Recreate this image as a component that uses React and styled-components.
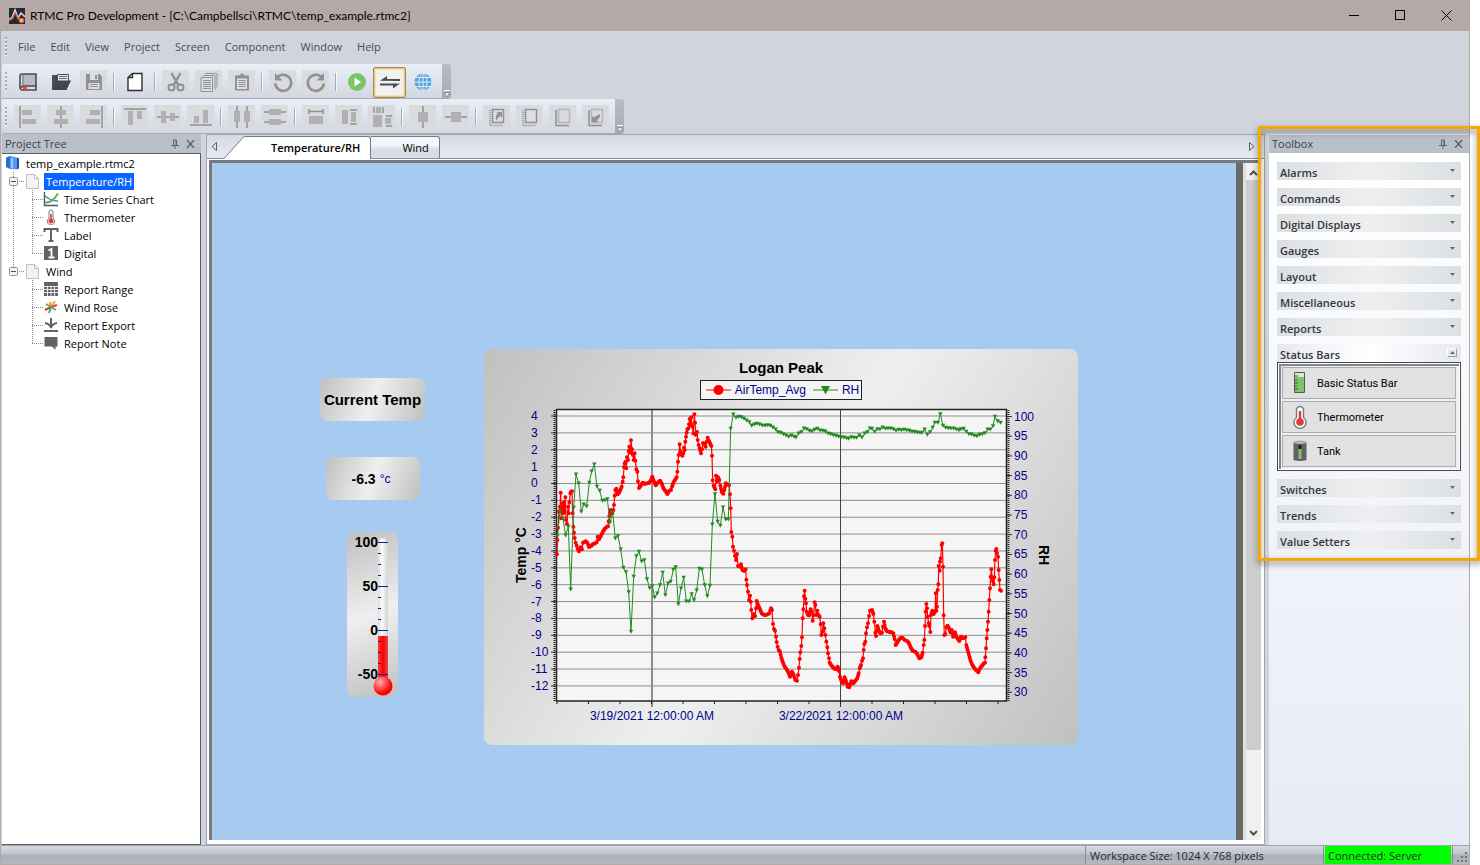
import React from "react";
import styled, { createGlobalStyle, css } from "styled-components";

const GlobalStyle = createGlobalStyle`
  * {
    box-sizing: border-box;
  }

  body {
    margin: 0;
    background: white;
    font-family: "Open Sans", "Segoe UI", sans-serif;
    font-size: 11px;
    color: black;
  }

  button {
    font: inherit;
    color: inherit;
    padding: 0;
    border: none;
    background: none;
  }

  ul {
    margin: 0;
    padding: 0;
    list-style: none;
  }
`;

/* ---------- toolbar icons, all on a 20x20 grid ---------- */

const gray = "#8f9195";
const soft = "#aeb0b4";

const icons = {
  newProject: (
    <>
      <path d="M4 2h14v12H5.500q-2 0-2 2" fill="#b9bbbe" stroke="#4b4c50" strokeWidth="1.600" />
      <path d="M4 2q-2 0-2 2.500V15q0 3 2.500 3H18v-4" fill="none" stroke="#4b4c50" strokeWidth="1.600" />
      <path d="M5 2v12" stroke="#77797d" />
      <path d="M5 16h12" stroke="#d8d9db" strokeWidth="2" />
      <path d="M5 14.500h4V19l-2-1.500L5 19z" fill="#e0454a" />
    </>
  ),
  open: (
    <>
      <path d="M1.500 17V3.500H6l1 2h1" fill="#4b4c50" stroke="#4b4c50" />
      <path d="M6.500 2.500h11v8h-11z" fill="#e6e7ea" stroke="#4b4c50" />
      <path d="M8 4.500h8M8 6.500h8" stroke="#6a6b70" />
      <path d="M5 8.500h15L15.500 18H1z" fill="#45464a" />
    </>
  ),
  save: (
    <>
      <path d="M2 2h13.500L18 4.500V18H2z" fill={gray} />
      <path d="M6 2h8v6H6z" fill="#dcdee2" />
      <path d="M11 3h2v4h-2z" fill={gray} />
      <path d="M4.500 11h11v6h-11z" fill="#dcdee2" />
      <path d="M6 12.500h8M6 14.500h8" stroke={gray} />
    </>
  ),
  page: <path d="M7.500 1.500H17v17H3v-13zM7.500 1.500v4H3" fill="white" stroke="#2e2f32" strokeWidth="1.400" />,
  cut: (
    <g fill="none" stroke={gray} strokeWidth="2">
      <path d="M5.500 1l6.800 12M14.500 1L7.700 13" strokeWidth="2.400" />
      <circle cx="5.500" cy="15.500" r="3" />
      <circle cx="14.500" cy="15.500" r="3" />
    </g>
  ),
  copy: (
    <>
      <path d="M6 1.500h12v14" fill="none" stroke={gray} />
      <path d="M4 3.500h12v14" fill="none" stroke={gray} />
      <path d="M2 5.500h11.500v14H2z" fill="#dcdee2" stroke={gray} />
      <path d="M4 8.500h8M4 10.500h8M4 12.500h8M4 14.500h8M4 16.500h8" stroke={gray} />
    </>
  ),
  paste: (
    <>
      <path d="M3 3.500h14v15H3z" fill={gray} />
      <path d="M5 6.500h10v10.500H5z" fill="#dcdee2" />
      <path d="M6 5.500V3.500h2.500v-2h3v2H14v2z" fill={gray} />
      <path d="M6.500 8.500h7M6.500 10.500h7M6.500 12.500h7M6.500 14.500h7" stroke={gray} />
    </>
  ),
  undo: (
    <>
      <path d="M4.200 5.500A8 8 0 1 1 2.200 11.500" fill="none" stroke={gray} strokeWidth="2.600" />
      <path d="M2 1v7.500h7.500z" fill={gray} />
    </>
  ),
  redo: (
    <>
      <path d="M15.800 5.500A8 8 0 1 0 17.800 11.500" fill="none" stroke={gray} strokeWidth="2.600" />
      <path d="M18 1v7.500h-7.500z" fill={gray} />
    </>
  ),
  play: (
    <>
      <circle cx="10" cy="10" r="9" fill="#7cc466" />
      <path d="M7.500 5.500v9l6.500-4.500z" fill="white" />
    </>
  ),
  swap: <path d="M0 8.700l7-4.700v3h13v2zM20 11.500l-7 5v-3H0v-2z" fill="#4b4c50" />,
  globe: (
    <>
      <circle cx="10" cy="10" r="8.500" fill="#55a5dd" />
      <g fill="none" stroke="#dcebf8">
        <ellipse cx="10" cy="10" rx="4" ry="8.500" />
        <path d="M10 1v18M1 10h18M2.500 5.500h15M2.500 14.500h15" />
      </g>
    </>
  ),
  alignLeft: (
    <>
      <path d="M2 -1v22" stroke={gray} strokeWidth="1.500" />
      <path d="M4 3h10v5H4zM4 12h14v5H4z" fill={soft} />
    </>
  ),
  alignCenter: (
    <>
      <path d="M10 -1v22" stroke={gray} strokeWidth="1.500" />
      <path d="M5 3h10v5H5zM3 12h14v5H3z" fill={soft} />
    </>
  ),
  alignRight: (
    <>
      <path d="M18 -1v22" stroke={gray} strokeWidth="1.500" />
      <path d="M6 3h10v5H6zM2 12h14v5H2z" fill={soft} />
    </>
  ),
  alignTop: (
    <>
      <path d="M-1 2h22" stroke={gray} strokeWidth="1.500" />
      <path d="M3 4h5v14H3zM12 4h5v8h-5z" fill={soft} />
    </>
  ),
  alignMiddle: (
    <>
      <path d="M-1 10h22" stroke={gray} strokeWidth="1.500" />
      <path d="M3 4h5v12H3zM12 6h5v8h-5z" fill={soft} />
    </>
  ),
  alignBottom: (
    <>
      <path d="M-1 18h22" stroke={gray} strokeWidth="1.500" />
      <path d="M3 9h5v7H3zM12 3h5v13h-5z" fill={soft} />
    </>
  ),
  spaceAcross: (
    <>
      <path d="M5 -1v22M15 -1v22" stroke={gray} strokeWidth="1.500" />
      <path d="M2 4h6v11H2zM12 4h6v11h-6z" fill={soft} />
    </>
  ),
  spaceDown: (
    <>
      <path d="M-1 5h22M-1 15h22" stroke={gray} strokeWidth="1.500" />
      <path d="M4 2h12v6H4zM4 12h12v6H4z" fill={soft} />
    </>
  ),
  sameWidth: (
    <>
      <path d="M3 2v5M17 2v5M3 4.500h14" stroke={gray} strokeWidth="1.500" fill="none" />
      <path d="M3 9h14v8H3z" fill={soft} />
    </>
  ),
  sameHeight: (
    <>
      <path d="M11 3h7M11 17h7" stroke={gray} strokeWidth="1.500" fill="none" />
      <path d="M3 3h6v14H3zM12 5h5v10h-5z" fill={soft} />
    </>
  ),
  sameSize: (
    <>
      <path d="M2 0v6M11 0v6M14 9h6M14 19h6" stroke={gray} strokeWidth="1.500" />
      <path d="M1 8h9v12H1zM4 0h5v6H4zM13 11h6v6h-6z" fill={soft} />
    </>
  ),
  centerAcross: (
    <>
      <path d="M10 -1v22" stroke={gray} strokeWidth="1.500" />
      <path d="M5 5h10v10H5z" fill={soft} />
    </>
  ),
  centerDown: (
    <>
      <path d="M-1 10h22" stroke={gray} strokeWidth="1.500" />
      <path d="M5 5h10v10H5z" fill={soft} />
    </>
  ),
  bringFront: (
    <>
      <path d="M3 3v15.500h13" fill="none" stroke={gray} strokeDasharray="1 1" strokeWidth="1.500" />
      <path d="M5.500 2.500h11v13h-11z" fill="#dcdee2" stroke={gray} strokeWidth="1.500" />
      <path d="M9 14q-1-6 2-8l-2-1h6v6l-1.500-2Q11 10 9 14z" fill={gray} />
    </>
  ),
  bringForward: (
    <>
      <path d="M3 3v15.500h13" fill="none" stroke={gray} strokeDasharray="1 1" strokeWidth="1.500" />
      <path d="M5.500 2.500h11v13h-11z" fill="#dcdee2" stroke={gray} strokeWidth="1.500" />
    </>
  ),
  sendBackward: (
    <>
      <path d="M3 3v15.500h13" fill="none" stroke={gray} strokeWidth="1.500" />
      <path d="M5.500 2.500h11v13h-11z" fill="none" stroke={gray} strokeDasharray="1 1" strokeWidth="1.500" />
    </>
  ),
  sendBack: (
    <>
      <path d="M3 3v15.500h13" fill="none" stroke={gray} strokeWidth="1.500" />
      <path d="M5.500 2.500h11v13h-11z" fill="none" stroke={gray} strokeDasharray="1 1" strokeWidth="1.500" />
      <path d="M14 7q0 5-3 6l1 2H6V9l1.500 1.500Q11 8 14 7z" fill={gray} />
    </>
  ),
};

const ToolIcon = ({ name }) => (
  <svg width="20" height="20" viewBox="0 0 20 20" overflow="visible">
    {icons[name]}
  </svg>
);

/* ---------- tree and toolbox icons, 16x16 ---------- */

const smallIcons = {
  project: (
    <>
      <path d="M1 2.500L5 1v13l-4-2z" fill="#2b6fd0" />
      <path d="M5 1l7 1.500v12L5 14z" fill="#4f9bef" />
      <path d="M12 2.500l2 1v10l-2 1z" fill="#1c4fa3" />
      <path d="M6 3l2 .5v10L6 13z" fill="#9cc9fa" />
    </>
  ),
  screen: <path d="M1.500 1.500h8l4 4v10h-12zM9.500 1.500v4h4" fill="#f3f3f3" stroke="#bfbfbf" />,
  chart: (
    <>
      <path d="M1.500 1v13.500H15" fill="none" stroke="#55585d" strokeWidth="1.400" />
      <path d="M2 5q6 5 13 5" fill="none" stroke="#3d86c6" strokeWidth="1.400" />
      <path d="M2 11.500q7 1 13-9" fill="none" stroke="#62b346" strokeWidth="2" />
    </>
  ),
  thermometer: (
    <>
      <path d="M6 3a2 2 0 0 1 4 0v6.200a3.700 3.700 0 1 1-4 0z" fill="white" stroke="#77797d" />
      <path d="M8 5v6" stroke="#e23b35" strokeWidth="1.600" />
      <circle cx="8" cy="12" r="2.500" fill="#e23b35" />
    </>
  ),
  label: <path d="M1.500 5V2h13v3M8 2v12M5.500 14h5" fill="none" stroke="#606266" strokeWidth="2" />,
  digital: (
    <>
      <path d="M1 1h14v14H1z" fill="#606266" />
      <path d="M5.500 5.500L8.500 4v8.500M5.500 12.500h6" fill="none" stroke="white" strokeWidth="1.800" />
    </>
  ),
  range: (
    <>
      <path d="M1 1h14v14H1z" fill="#606266" />
      <path d="M1 5.500h14M1 8.500h14M1 11.500h14M4.500 5v10M8 5v10M11.500 5v10" stroke="#e9eaeb" />
    </>
  ),
  rose: (
    <g strokeWidth="2">
      <path d="M8 8l4-6" stroke="#e8b82d" />
      <path d="M8 8L7 3" stroke="#f0932b" />
      <path d="M8 8l6-2" stroke="#e23b35" />
      <path d="M8 8l5 3" stroke="#62b346" />
      <path d="M8 8l-2 6" stroke="#3fa0b5" />
      <path d="M8 8l-6 3" stroke="#e23b35" />
      <path d="M8 8L3 5" stroke="#62b346" />
    </g>
  ),
  export: (
    <>
      <path d="M8 1v9" stroke="#606266" strokeWidth="2" />
      <path d="M2 6q5 1 6 5 1-4 6-5" fill="none" stroke="#606266" strokeWidth="1.800" />
      <path d="M1 14h14" stroke="#606266" strokeWidth="2" />
    </>
  ),
  note: <path d="M1.500 2h13v9.500h-2V15L9 11.500H1.500z" fill="#606266" />,
};

const SmallIcon = ({ name }) => (
  <svg width="16" height="16" viewBox="0 0 16 16">
    {smallIcons[name]}
  </svg>
);

const partIcons = {
  bar: (
    <>
      <path d="M6.500 1.500h10v20h-10z" fill="#d9eccf" stroke="#55585d" />
      <path d="M7 6h9v15H7z" fill="#7cc466" />
      <path d="M6 5h4M6 9h3M6 12h4M6 15h3M6 18h4" stroke="#3c5a33" />
    </>
  ),
  thermometer: (
    <>
      <path d="M8.500 5a3.500 3.500 0 0 1 7 0v7.500a6 6 0 1 1-7 0z" fill="white" stroke="#77797d" strokeWidth="1.400" />
      <path d="M12 6v10" stroke="#e23b35" strokeWidth="2.500" />
      <circle cx="12" cy="17" r="3.800" fill="#e23b35" />
    </>
  ),
  tank: (
    <>
      <path d="M5.500 3q6.500-2.500 13 0v18q-6.500 2-13 0z" fill="#606266" />
      <ellipse cx="12" cy="3.500" rx="6.500" ry="1.500" fill="#b5b7ba" />
      <path d="M10.500 6h3v14h-3z" fill="#7cc466" />
      <path d="M10.500 6h3v4h-3z" fill="#17181a" />
    </>
  ),
};

const PinIcon = () => (
  <svg width="8" height="10" viewBox="0 0 8 10">
    <path d="M2.500 6V1h3v5M5 1v5M0 6.500h8M4 7v3" fill="none" stroke="#5c6068" />
  </svg>
);

const CloseIcon = () => (
  <svg width="9" height="8" viewBox="0 0 9 8">
    <path d="M1 0l7 8M8 0L1 8" stroke="#5c6068" strokeWidth="1.400" />
  </svg>
);

/* ---------- content ---------- */

const menus = ["File", "Edit", "View", "Project", "Screen", "Component", "Window", "Help"];

const mainTools = [
  ["newProject", "New project", true],
  ["open", "Open project", true],
  ["save", "Save"],
  null,
  ["page", "New screen", true],
  null,
  ["cut", "Cut"],
  ["copy", "Copy"],
  ["paste", "Paste"],
  null,
  ["undo", "Undo"],
  ["redo", "Redo"],
  null,
  ["play", "Run", true],
  ["swap", "Connect", true, true],
  ["globe", "Web", true],
];

const layoutTools = [
  ["alignLeft", "Align left"],
  ["alignCenter", "Align center"],
  ["alignRight", "Align right"],
  null,
  ["alignTop", "Align top"],
  ["alignMiddle", "Align middle"],
  ["alignBottom", "Align bottom"],
  null,
  ["spaceAcross", "Space across"],
  ["spaceDown", "Space down"],
  null,
  ["sameWidth", "Same width"],
  ["sameHeight", "Same height"],
  ["sameSize", "Same size"],
  null,
  ["centerAcross", "Center horizontally"],
  ["centerDown", "Center vertically"],
  null,
  ["bringFront", "Bring to front"],
  ["bringForward", "Bring forward"],
  ["sendBackward", "Send backward"],
  ["sendBack", "Send to back"],
];

const screens = [
  {
    name: "Temperature/RH",
    selected: true,
    parts: [
      ["chart", "Time Series Chart"],
      ["thermometer", "Thermometer"],
      ["label", "Label"],
      ["digital", "Digital"],
    ],
  },
  {
    name: "Wind",
    parts: [
      ["range", "Report Range"],
      ["rose", "Wind Rose"],
      ["export", "Report Export"],
      ["note", "Report Note"],
    ],
  },
];

const groups = [
  "Alarms",
  "Commands",
  "Digital Displays",
  "Gauges",
  "Layout",
  "Miscellaneous",
  "Reports",
  "Status Bars",
  "Switches",
  "Trends",
  "Value Setters",
];

const statusBarParts = [
  ["bar", "Basic Status Bar"],
  ["thermometer", "Thermometer"],
  ["tank", "Tank"],
];

/* ---------- chart data, three units to a pixel ---------- */

const tempFirst =
  "231,643 232,600 234,563 237,515 240,500 242,458 244,535 246,510 248,490 250,520 252,487 254,515 256,472 258,540 261,552 264,500 266,520 268,487 271,460 273,455 276,454 278,520 280,560 282,578 284,594 287,608 290,617 293,627 297,634 302,622 306,628 309,608 317,604 322,608 327,621 333,618 338,613 345,610 350,607 353,590 357,598 362,589 368,577 374,566 379,562 384,559 388,528 392,510 397,520 400,510 402,495 404,467 406,450 409,446 413,463 416,460 420,452 425,440 428,425 430,412 432,381 434,370 437,365 439,385 441,352 444,360 446,333 448,320 451,338 453,301 456,328 459,345 461,360 464,340 466,362 469,388 472,395 474,424 477,444 482,437 488,428 495,432 502,430 508,428 513,420 517,410 521,422 527,436 533,428 540,422 546,432 550,445 556,452 562,462 568,452 573,450 576,440 580,428 585,420 590,412 592,395 594,365 596,345 599,313 602,335 607,347 610,340 612,323 614,330 616,305 618,290 620,278 622,268 625,265 627,253 629,237 632,255 634,232 637,260 640,280 643,223 645,248 647,284 651,276 653,300 656,315 659,325 663,340 666,328 669,309 673,312 677,320 680,305 683,293 686,302 690,310 694,318 696,347 698,421 701,437 706,448 708,407 711,425 714,412 718,420 721,437 725,455 730,461 733,450 737,430 742,433 747,436 750,463 752,505 754,576 757,590 759,620 762,632 765,648 768,660 771,642 774,678 780,680 783,673 787,690 792,693 797,688 799,719 801,735 804,755 807,780 810,767 812,785 814,810 817,835 821,822 825,828 828,805 830,783 834,795 840,808 845,820 853,825 860,824 868,820 873,805 876,810 879,852 882,867 885,872 888,890 890,906 893,920 896,930";

const tempSecond =
  "0,935 4,953 8,965 13,978 18,985 24,995 30,1010 36,995 41,1005 46,1020 51,1022 54,1005 57,983 59,957 61,937 64,918 66,892 68,835 70,808 72,769 74,752 76,776 78,790 80,815 84,825 88,826 92,808 95,815 98,842 101,825 104,787 106,795 109,825 112,812 115,825 119,830 122,853 124,885 127,875 130,850 133,865 136,885 139,905 142,922 144,940 147,955 149,968 155,977 162,985 168,988 173,980 177,993 180,1010 184,1022 189,1030 194,1012 199,1025 203,1040 208,1042 214,1024 220,1030 226,1022 232,1015 236,1000 239,985 243,975 246,962 249,955 251,930 253,912 256,905 258,880 261,862 264,850 267,828 270,812 276,810 280,822 283,845 286,878 288,888 292,858 296,870 301,880 306,878 309,860 312,845 316,865 320,873 328,876 335,877 340,880 344,897 347,915 353,905 360,895 367,893 374,900 380,902 386,908 392,922 398,932 406,935 412,943 418,955 424,952 428,938 431,915 433,900 435,858 437,815 439,792 441,805 443,830 446,850 448,858 451,876 453,825 457,812 461,822 465,815 467,760 469,812 471,800 473,750 475,733 476,678 479,692 480,665 482,655 485,615 487,610 489,680 491,826 493,885 496,882 499,862 503,857 507,865 511,877 515,870 519,890 525,877 530,892 538,903 543,890 549,895 556,892 559,915 563,930 567,945 571,960 576,973 582,983 588,990 595,997 600,985 606,977 612,970 615,968 616,952 618,925 620,895 622,870 624,845 626,815 628,780 630,745 632,710 634,688 637,715 641,733 643,712 645,660 647,632 649,627 651,640 654,650 656,690 658,720 660,750 663,752";

const rhFirst =
  "232,588 240,513 249,535 257,586 265,560 272,748 281,503 288,403 296,430 304,515 311,493 320,499 328,428 335,394 343,373 351,440 359,452 367,482 375,481 382,477 390,548 398,518 406,595 414,588 422,628 430,683 438,696 446,756 453,875 461,710 469,648 477,635 485,664 493,660 501,717 509,744 517,738 524,772 532,760 540,735 548,698 556,765 564,730 572,725 580,689 587,681 595,792 603,745 611,713 619,784 627,784 635,762 642,780 650,751 658,686 666,688 674,735 682,768 690,737 697,553 705,462 713,545 721,557 729,502 737,538 745,538 752,266 760,223 768,233 776,230 784,231 792,236 800,241 808,246 815,257 823,253 831,251 839,253 847,256 855,257 863,255 871,257 879,262 887,268 894,276";

const rhSecond =
  "2,278 10,282 18,286 26,290 34,286 42,290 48,292 56,280 64,276 72,265 80,267 88,272 96,274 104,269 112,266 120,271 128,272 136,274 144,280 152,282 160,285 168,287 176,290 184,291 192,292 200,294 206,296 214,291 222,293 230,293 238,286 246,292 254,280 262,276 270,265 276,266 284,275 292,267 300,268 308,262 316,266 324,265 332,265 340,267 348,272 356,269 364,270 372,269 380,270 388,272 396,275 404,275 412,277 420,278 426,278 434,268 442,284 450,276 458,263 464,248 474,248 481,222 489,257 497,263 505,264 513,265 521,265 529,268 537,270 543,267 551,266 559,275 567,282 575,283 583,287 591,288 599,284 607,282 615,279 623,268 631,268 639,258 645,230 653,243 662,248";

const readPoints = (text, shift) =>
  text.split(" ").map((pair) => {
    const [x, y] = pair.split(",").map(Number);
    return [(x + shift) / 3 - 4, y / 3 - 60];
  });

const temp = [...readPoints(tempFirst, 0), ...readPoints(tempSecond, 900)];
const rh = [...readPoints(rhFirst, 0), ...readPoints(rhSecond, 900)];

const toLine = (points) => points.map((p) => p.join(",")).join(" ");

// the logger stores a temperature every quarter of an hour, so fill in between the turns
const tempDots = temp
  .flatMap(([x, y], i) => {
    const next = temp[i + 1];
    if (!next) return [[x, y]];
    const steps = Math.max(1, Math.round((next[0] - x) / 0.67));
    return Array.from({ length: steps }, (_, k) => [
      x + ((next[0] - x) * k) / steps,
      y + ((next[1] - y) * k) / steps,
    ]);
  })
  .map(([x, y]) => `M${x} ${y}h.01`)
  .join("");

const rhMarks = rh.map(([x, y]) => `M${x - 2.2} ${y - 1.8}h4.400l-2.200 4z`).join("");

const range = (from, to, step) =>
  Array.from({ length: Math.floor((to - from) / step) + 1 }, (_, i) => from + i * step);

const tempY = (v) => 16 + (4 - v) * 16.87;
const rhY = (v) => 16.5 + (100 - v) * 3.94;

function TimeSeries() {
  return (
    <PlotSvg viewBox="0 0 594 345" role="img" aria-label="Temperature and humidity over time">
      <rect x="73" y="10" width="449" height="291" fill="#f5f5f5" />
      {range(-12, 4, 1).map((v) => (
        <g key={v}>
          <path d={`M73 ${tempY(v)}H522`} stroke="#8d8d8d" />
          <path d={`M67 ${tempY(v)}h5`} stroke="#333" />
          <text x="47" y={tempY(v) + 4}>
            {v}
          </text>
        </g>
      ))}
      {range(30, 100, 5).map((v) => (
        <g key={v}>
          <path d={`M523 ${rhY(v)}h5`} stroke="#333" />
          <text x="530" y={rhY(v) + 4}>
            {v}
          </text>
        </g>
      ))}
      <path d="M168 10v297" stroke="#8d8d8d" strokeWidth="2" />
      <path d="M356.500 10v297" stroke="#444" />
      {range(73, 522, 31.5).map((x) => (
        <path key={x} d={`M${x} 301v3`} stroke="#222" />
      ))}
      <path d="M70.500 10v291M524.500 10v291" stroke="#222" strokeWidth="2" strokeDasharray="1 1" />
      <path d="M72.500 9.500h450v291.500h-450z" fill="none" stroke="#222" strokeWidth="1.500" />
      <polyline points={toLine(temp)} fill="none" stroke="#ff0000" strokeWidth="1.200" />
      <path d={tempDots} stroke="#ff0000" strokeWidth="4" strokeLinecap="round" />
      <polyline points={toLine(rh)} fill="none" stroke="#228b22" />
      <path d={rhMarks} fill="#228b22" />
      <text x="168" y="320" textAnchor="middle">
        3/19/2021 12:00:00 AM
      </text>
      <text x="357" y="320" textAnchor="middle">
        3/22/2021 12:00:00 AM
      </text>
      <AxisTitle transform="translate(42 155) rotate(-90)">Temp °C</AxisTitle>
      <AxisTitle transform="translate(555 155) rotate(90)">RH</AxisTitle>
    </PlotSvg>
  );
}

function ThermometerDrawing() {
  return (
    <svg width="51" height="165" viewBox="0 0 51 165">
      <defs>
        <linearGradient id="tube">
          <stop offset="0" stopColor="#dcdcdc" />
          <stop offset="0.4" stopColor="#fafafa" />
          <stop offset="1" stopColor="#d2d2d2" />
        </linearGradient>
        <linearGradient id="mercury">
          <stop offset="0" stopColor="#f53c3c" />
          <stop offset="0.5" stopColor="#ff0000" />
          <stop offset="1" stopColor="#e64646" />
        </linearGradient>
        <radialGradient id="bulb" cx="0.35" cy="0.3" r="0.6">
          <stop offset="0" stopColor="#ffb0b0" />
          <stop offset="1" stopColor="#ff0000" />
        </radialGradient>
      </defs>
      <rect x="31" y="6" width="10" height="145" rx="5" fill="url(#tube)" />
      <rect x="31" y="104" width="10" height="44" fill="url(#mercury)" />
      <circle cx="36" cy="154" r="9.500" fill="url(#bulb)" />
      {range(0, 12, 1).map((i) => (
        <path key={i} d={`M31 ${10.5 + i * 11}h${i % 4 ? 3 : 10}`} stroke="#1a1a9c" />
      ))}
      {[100, 50, 0, -50].map((v, i) => (
        <ScaleText key={v} x="31" y={15 + i * 44} textAnchor="end">
          {v}
        </ScaleText>
      ))}
    </svg>
  );
}

function Tools({ tools, label }) {
  return (
    <ToolbarRow aria-label={label}>
      <ToolbarBody>
        <Grip />
        {tools.map((tool, i) =>
          tool ? (
            <ToolButton key={i} title={tool[1]} $enabled={tool[2]} $active={tool[3]}>
              <ToolIcon name={tool[0]} />
            </ToolButton>
          ) : (
            <Divider key={i} />
          )
        )}
      </ToolbarBody>
      <ToolbarEnd title="Toolbar options">
        <svg width="6" height="7" viewBox="0 0 6 7">
          <path d="M0 .5h6" stroke="white" />
          <path d="M0 3h6L3 6.500z" fill="white" stroke="#666a73" strokeWidth=".6" />
        </svg>
      </ToolbarEnd>
    </ToolbarRow>
  );
}

function PanelHeader({ title }) {
  return (
    <PanelBar>
      <PanelTitle>{title}</PanelTitle>
      <PanelButton title="Auto hide">
        <PinIcon />
      </PanelButton>
      <PanelButton title="Close">
        <CloseIcon />
      </PanelButton>
    </PanelBar>
  );
}

function ProjectTree() {
  return (
    <TreePanel>
      <PanelHeader title="Project Tree" />
      <Tree>
        <TreeRow>
          <RootIcon>
            <SmallIcon name="project" />
          </RootIcon>
          <TreeText>temp_example.rtmc2</TreeText>
        </TreeRow>
        {screens.map((screen, s) => (
          <li key={screen.name}>
            <TreeRow as="div">
              <Guide $width={12} $half={s === screens.length - 1} $line>
                <Expander title="Collapse">
                  <svg width="9" height="9" viewBox="0 0 9 9">
                    <rect x=".5" y=".5" width="8" height="8" rx="1" fill="#f4f4f4" stroke="#919191" />
                    <path d="M2 4.500h5" stroke="#3c4fa0" />
                  </svg>
                </Expander>
              </Guide>
              <SmallIcon name="screen" />
              <TreeText $selected={screen.selected}>{screen.name}</TreeText>
            </TreeRow>
            <ul>
              {screen.parts.map(([icon, name], i) => (
                <TreeRow key={name}>
                  <Guide $width={19} $none={s === screens.length - 1} />
                  <Guide $width={11} $half={i === screen.parts.length - 1} $line />
                  <SmallIcon name={icon} />
                  <TreeText>{name}</TreeText>
                </TreeRow>
              ))}
            </ul>
          </li>
        ))}
      </Tree>
    </TreePanel>
  );
}

function Toolbox() {
  return (
    <ToolboxPanel>
      <PanelHeader title="Toolbox" />
      <Groups>
        {groups.map((name) => {
          const open = name === "Status Bars";
          return (
            <section key={name}>
              <GroupHeader $open={open} aria-expanded={open}>
                {name}
                <GroupArrow $open={open}>
                  <svg width="5" height="3" viewBox="0 0 5 3">
                    <path d={open ? "M0 3h5L2.500 0z" : "M0 0h5L2.500 3z"} fill="#666a70" />
                  </svg>
                </GroupArrow>
              </GroupHeader>
              {open && (
                <PartList>
                  {statusBarParts.map(([icon, label]) => (
                    <PartButton key={label}>
                      <svg width="24" height="24" viewBox="0 0 24 24">
                        {partIcons[icon]}
                      </svg>
                      {label}
                    </PartButton>
                  ))}
                </PartList>
              )}
            </section>
          );
        })}
      </Groups>
      <Callout />
    </ToolboxPanel>
  );
}

function App() {
  return (
    <>
      <GlobalStyle />
      <Window>
        <TitleBar>
          <svg width="16" height="16" viewBox="0 0 16 16">
            <path d="M0 0h16v16H0z" fill="#24283a" />
            <path d="M0 11l3-1 3-8 3 8 3-5 4 4" fill="none" stroke="#d8d3d2" strokeWidth="1.600" />
            <path d="M0 13l4-3 2-5 3 5 3 2" fill="none" stroke="#d8552c" strokeWidth="1.200" />
            <circle cx="12.500" cy="12.500" r="2.800" fill="#f0642a" />
            <circle cx="12.500" cy="12.500" r="1.200" fill="#ffd9a0" />
          </svg>
          <WindowTitle>RTMC Pro Development - [C:\Campbellsci\RTMC\temp_example.rtmc2]</WindowTitle>
          <WindowButton title="Minimize">
            <svg width="11" height="11" viewBox="0 0 11 11">
              <path d="M0 5.500h10" stroke="black" />
            </svg>
          </WindowButton>
          <WindowButton title="Maximize">
            <svg width="11" height="11" viewBox="0 0 11 11">
              <path d="M.5 .5h9v9h-9z" fill="none" stroke="black" />
            </svg>
          </WindowButton>
          <WindowButton title="Close">
            <svg width="11" height="11" viewBox="0 0 11 11">
              <path d="M.5 .5l10 10M10.500 .5l-10 10" stroke="black" />
            </svg>
          </WindowButton>
        </TitleBar>
        <MenuBar>
          <Grip />
          {menus.map((name) => (
            <MenuButton key={name}>{name}</MenuButton>
          ))}
        </MenuBar>
        <Tools tools={mainTools} label="Standard" />
        <Tools tools={layoutTools} label="Layout" />
        <Body>
          <ProjectTree />
          <Workspace>
            <TabStrip>
              <TabScroll title="Scroll left">
                <svg width="6" height="9" viewBox="0 0 6 9">
                  <path d="M5.500 .5v8L1 4.500z" fill="none" stroke="#5c6068" />
                </svg>
              </TabScroll>
              <TabSlant width="21" height="23" viewBox="0 0 21 23">
                <path d="M0 23L19 1.500 21 .5V23z" fill="white" />
                <path d="M0 22.500L19 1.500 21 .5" fill="none" stroke="#777b85" />
              </TabSlant>
              <Tab $active>Temperature/RH</Tab>
              <Tab>Wind</Tab>
              <TabSpace />
              <TabScroll title="Scroll right">
                <svg width="6" height="9" viewBox="0 0 6 9">
                  <path d="M.5 .5v8L5 4.500z" fill="none" stroke="#5c6068" />
                </svg>
              </TabScroll>
            </TabStrip>
            <ScreenFrame>
              <ScreenCanvas>
                <LabelWidget>Current Temp</LabelWidget>
                <DigitalWidget>
                  -6.3 <Unit>°c</Unit>
                </DigitalWidget>
                <ThermometerWidget>
                  <ThermometerDrawing />
                </ThermometerWidget>
                <ChartWidget>
                  <ChartTitle>Logan Peak</ChartTitle>
                  <Legend>
                    <svg width="25" height="12" viewBox="0 0 25 12">
                      <path d="M0 6h25" stroke="#ff0000" />
                      <circle cx="12.500" cy="6" r="5" fill="#ff0000" />
                    </svg>
                    AirTemp_Avg
                    <svg width="25" height="12" viewBox="0 0 25 12">
                      <path d="M0 6h25" stroke="#228b22" />
                      <path d="M8 2h9l-4.500 8.500z" fill="#228b22" />
                    </svg>
                    RH
                  </Legend>
                  <TimeSeries />
                </ChartWidget>
              </ScreenCanvas>
              <ScrollTrack>
                <ScrollButton title="Scroll up">
                  <svg width="9" height="6" viewBox="0 0 9 6">
                    <path d="M1 5l3.500-3.500L8 5" fill="none" stroke="#505050" strokeWidth="2" />
                  </svg>
                </ScrollButton>
                <ScrollThumb />
                <ScrollSpace />
                <ScrollButton title="Scroll down">
                  <svg width="9" height="6" viewBox="0 0 9 6">
                    <path d="M1 1l3.500 3.500L8 1" fill="none" stroke="#505050" strokeWidth="2" />
                  </svg>
                </ScrollButton>
              </ScrollTrack>
            </ScreenFrame>
          </Workspace>
          <Toolbox />
        </Body>
        <StatusBar>
          <StatusCell $width={238}>Workspace Size: 1024 X 768 pixels</StatusCell>
          <StatusCell $width={130} $connected>
            <span>Connected: Server</span>
          </StatusCell>
          <svg width="16" height="18" viewBox="0 0 16 18">
            <path
              d="M12 6h2v2h-2zM12 10h2v2h-2zM8 10h2v2H8zM12 14h2v2h-2zM8 14h2v2H8zM4 14h2v2H4z"
              fill="#6d717b"
            />
          </svg>
        </StatusBar>
      </Window>
    </>
  );
}

export default App;

const Window = styled.div`
  display: flex;
  flex-direction: column;
  height: 100vh;
  min-height: 600px;
  margin-right: 10px;
  border: 1px solid #b5a9a7;
  border-top: none;
  background: #d0d4dd;
`;

const TitleBar = styled.header`
  display: flex;
  align-items: center;
  height: 31px;
  padding-left: 8px;
  background: #b5a9a7;
`;

const WindowTitle = styled.h1`
  flex: 1;
  margin: 0 0 0 5px;
  font-family: Lato, "Segoe UI", sans-serif;
  font-size: 12px;
  font-weight: 400;
  line-height: 16px;
`;

const WindowButton = styled.button`
  display: flex;
  align-items: center;
  justify-content: center;
  width: 46px;
  height: 30px;
`;

const Grip = styled.span`
  width: 2px;
  height: 20px;
  background: repeating-linear-gradient(#a4a9b5 0 2px, #f4f6fa 2px 3px, transparent 3px 4px);
`;

const MenuBar = styled.nav`
  display: flex;
  align-items: center;
  height: 33px;
  padding: 0 0 2px 4px;

  ${Grip} {
    margin-right: 2px;
  }
`;

const MenuButton = styled.button`
  margin-left: 3px;
  padding: 0 6px;
  line-height: 20px;
  color: #4a4d55;
`;

const ToolbarRow = styled.div`
  display: flex;
  height: 35px;
  padding-left: 1px;
`;

const ToolbarBody = styled.div`
  display: flex;
  align-items: center;
  gap: 6px;
  padding: 2px 6px 0 3px;
  border-bottom: 1px solid #a7abb6;
  border-radius: 3px 0 0 3px;
  background: linear-gradient(#eaeef7, #d3d7e1);

  ${Grip} {
    margin-right: 1px;
  }
`;

const ToolbarEnd = styled.button`
  display: flex;
  align-items: flex-end;
  justify-content: center;
  width: 9px;
  padding-bottom: 2px;
  border-radius: 0 3px 3px 0;
  background: linear-gradient(#b9bdc7, #a5a9b4);
`;

const ToolButton = styled.button`
  display: flex;
  align-items: center;
  justify-content: center;
  width: 27px;
  height: 25px;
  background: ${(props) => (props.$enabled ? "transparent" : "#d9dbdf")};

  ${(props) =>
    props.$active &&
    css`
      width: 33px;
      height: 31px;
      margin: 0 -3px;
      border: 1px solid #9a8a70;
      border-radius: 2px;
      background: #f0f1f3;
      box-shadow: inset 0 0 0 1px #f5c07a, inset 0 0 0 2px #fbe3a8;
    `}
`;

const Divider = styled.span`
  width: 2px;
  height: 18px;
  border-left: 1px solid #a7abb6;
  border-right: 1px solid #f8f9fc;
`;

const Body = styled.main`
  display: flex;
  flex: 1;
  min-height: 0;
`;

const PanelBar = styled.div`
  display: flex;
  align-items: center;
  height: 18px;
  padding: 0 5px 0 3px;
  background: #bac0ca;
`;

const PanelTitle = styled.h2`
  flex: 1;
  margin: 0;
  font-size: 11px;
  font-weight: 400;
  line-height: 18px;
  color: #3d4048;
`;

const PanelButton = styled.button`
  display: flex;
  align-items: center;
  justify-content: center;
  width: 17px;
  height: 16px;

  & + & {
    width: 11px;
    margin-left: 2px;
  }
`;

const TreePanel = styled.aside`
  display: flex;
  flex-direction: column;
  width: 200px;
  padding-left: 1px;
  border-top: 1px solid #bac0ca;
`;

const Tree = styled.ul`
  flex: 1;
  border: 1px solid #5b5e66;
  border-left: none;
  background: white;
`;

const TreeRow = styled.li`
  display: flex;
  align-items: center;
  height: 18px;
  padding-left: 11px;
`;

const RootIcon = styled.span`
  display: flex;
  margin-left: -8px;
`;

const TreeText = styled.span`
  margin-left: 3px;
  padding: 0 2px;
  line-height: 17px;
  color: ${(props) => (props.$selected ? "white" : "black")};
  background: ${(props) => (props.$selected ? "#0a64ff" : "none")};
`;

const dots = "#8b8b8b 0 1px, transparent 1px 2px";

const Guide = styled.span`
  display: flex;
  align-items: center;
  align-self: stretch;
  width: ${(props) => props.$width}px;
  background-repeat: no-repeat;
  background-position: 0 0, 0 50%;
  background-image: repeating-linear-gradient(${dots}), repeating-linear-gradient(90deg, ${dots});
  background-size: ${(props) => (props.$none ? "0 0" : props.$half ? "1px 50%" : "1px 100%")},
    ${(props) => (props.$line ? "100% 1px" : "0 0")};
`;

const Expander = styled.button`
  display: flex;
  margin-left: -4px;
`;

const Workspace = styled.section`
  display: flex;
  flex: 1;
  flex-direction: column;
  min-width: 0;
  margin: 0 4px 0 5px;
  border: 1px solid #a0a4ae;
  background: white;
`;

const TabStrip = styled.div`
  display: flex;
  align-items: flex-end;
  height: 24px;
  padding-right: 5px;
  border-bottom: 1px solid #8a8e98;
  background: linear-gradient(#d4d8e1, #e8ebf4);
`;

const TabScroll = styled.button`
  width: 14px;
  height: 24px;
`;

const TabSlant = styled.svg`
  margin: 0 0 -1px 3px;
`;

const Tab = styled.button`
  height: 22px;
  padding: 0 10px 0 31px;
  border: 1px solid #777b85;
  border-bottom: none;
  border-left: none;
  border-radius: 0 3px 0 0;
  background: linear-gradient(#f4f6fa 40%, #d8dce6 60%);
  line-height: 20px;

  ${(props) =>
    props.$active &&
    css`
      height: 23px;
      margin-bottom: -1px;
      padding-left: 26px;
      background: white;
      font-weight: 600;
    `}
`;

const TabSpace = styled.span`
  flex: 1;
`;

const ScreenFrame = styled.div`
  display: flex;
  flex: 1;
  min-height: 0;
  margin: 1px 3px 4px 2px;
  border-top: 3px solid #77797c;
  border-left: 3px solid #77797c;
`;

const ScreenCanvas = styled.div`
  position: relative;
  flex: 1;
  overflow: hidden;
  border-right: 7px solid #696969;
  background: #a6caf0;
  font-family: "Liberation Sans", Arial, sans-serif;
`;

const Widget = styled.div`
  position: absolute;
  border-radius: 8px;
`;

const TextWidget = styled(Widget)`
  display: flex;
  align-items: center;
  justify-content: center;
  height: 43px;
  background: linear-gradient(111deg, #c0c0c0, #efefef 50%, #c0c0c0);
  font-size: 15px;
  font-weight: 700;
`;

const LabelWidget = styled(TextWidget)`
  left: 108px;
  top: 215px;
  width: 105px;
`;

const DigitalWidget = styled(TextWidget)`
  left: 114px;
  top: 294px;
  width: 94px;
  gap: 4px;
  padding-right: 4px;
  font-size: 14px;
`;

const Unit = styled.span`
  font-size: 12px;
  font-weight: 400;
  color: #00008b;
`;

const ThermometerWidget = styled(Widget)`
  left: 135px;
  top: 369px;
  width: 51px;
  height: 165px;
  background: linear-gradient(160deg, #c0c0c0, #efefef 50%, #c0c0c0);
`;

const ScaleText = styled.text`
  font-size: 14px;
  font-weight: 700;
`;

const ChartWidget = styled(Widget)`
  display: flex;
  flex-direction: column;
  align-items: center;
  left: 272px;
  top: 186px;
  width: 594px;
  height: 396px;
  padding-top: 9px;
  background: linear-gradient(122deg, #c0c0c0, #efefef 50%, #c0c0c0);
`;

const ChartTitle = styled.h3`
  margin: 0 0 2px;
  font-size: 15px;
  line-height: 20px;
`;

const Legend = styled.div`
  display: flex;
  align-items: center;
  gap: 4px;
  height: 20px;
  padding: 0 2px 0 5px;
  border: 1px solid #222222;
  background: #f5f5f5;
  font-size: 12px;
  color: #00008b;

  svg + svg {
    margin-left: 3px;
  }
`;

const PlotSvg = styled.svg`
  width: 594px;
  height: 345px;

  text {
    font-size: 12px;
    fill: #00008b;
  }
`;

const AxisTitle = styled.text`
  text-anchor: middle;

  ${PlotSvg} & {
    font-size: 14px;
    font-weight: 700;
    fill: black;
  }
`;

const ScrollTrack = styled.div`
  display: flex;
  flex-direction: column;
  width: 18px;
  border-left: 3px solid #e0e0e0;
  background: #f0f0f0;
`;

const ScrollButton = styled.button`
  height: 17px;
`;

const ScrollThumb = styled.span`
  flex: 570;
  background: #cdcdcd;
`;

const ScrollSpace = styled.span`
  flex: 73;
`;

const ToolboxPanel = styled.aside`
  position: relative;
  display: flex;
  flex-direction: column;
  width: 200px;
  border-top: 1px solid #e4e7ee;
`;

const Groups = styled.div`
  display: flex;
  flex: 1;
  flex-direction: column;
  gap: 8px;
  padding: 9px 8px 8px;
  background: linear-gradient(white, #e6ebf5);
`;

const GroupHeader = styled.button`
  display: flex;
  align-items: center;
  justify-content: space-between;
  width: 100%;
  height: 18px;
  padding: 4px 4px 0 3px;
  background: linear-gradient(90deg, #dce0e2, #eeeff1 50%, #dce0e2);
  font-weight: 600;
  line-height: 14px;
  color: #33363e;

  ${(props) =>
    props.$open &&
    css`
      background: linear-gradient(90deg, #e6e9ec, #ffffff 50%, #e6e9ec);
    `}
`;

const GroupArrow = styled.span`
  display: flex;
  align-items: center;
  justify-content: center;
  width: 10px;
  height: 9px;
  margin-bottom: 5px;
  border: 1px solid transparent;

  ${(props) =>
    props.$open &&
    css`
      border-color: #ffffff #9a9ea6 #9a9ea6 #ffffff;
      background: #e9ebee;
    `}
`;

const PartList = styled.div`
  display: flex;
  flex-direction: column;
  gap: 2px;
  padding: 4px 4px 3px;
  border: 1px solid #444b57;
  background: #f0f0f0;
  box-shadow: inset 0 0 0 1px white, inset 2px 2px 0 1px #84878c;
`;

const PartButton = styled.button`
  display: flex;
  align-items: center;
  gap: 5px;
  height: 32px;
  padding-left: 5px;
  border: 1px solid #adadad;
  background: #e1e1e1;
  font-family: Roboto, sans-serif;
`;

const Callout = styled.div`
  position: absolute;
  top: -9px;
  left: -11px;
  right: -11px;
  height: 435px;
  border: 3px solid #f8a800;
  filter: drop-shadow(0 3px 3px rgba(0, 0, 0, 0.5));
  pointer-events: none;
`;

const StatusBar = styled.footer`
  display: flex;
  justify-content: flex-end;
  height: 19px;
  border-top: 1px solid #a0a4ae;
  background: linear-gradient(#d6d9df, #bfc3ca 45%, #aaaeb7 50%, #b4b8c0);
`;

const StatusCell = styled.div`
  width: ${(props) => props.$width}px;
  padding-left: 4px;
  border-left: 1px solid #868a94;
  line-height: 19px;
  color: #26282d;

  ${(props) =>
    props.$connected &&
    css`
      padding: 0 1px;
      border-right: 1px solid #868a94;

      span {
        display: block;
        height: 18px;
        padding-left: 3px;
        background: #00ff00;
      }
    `}
`;
